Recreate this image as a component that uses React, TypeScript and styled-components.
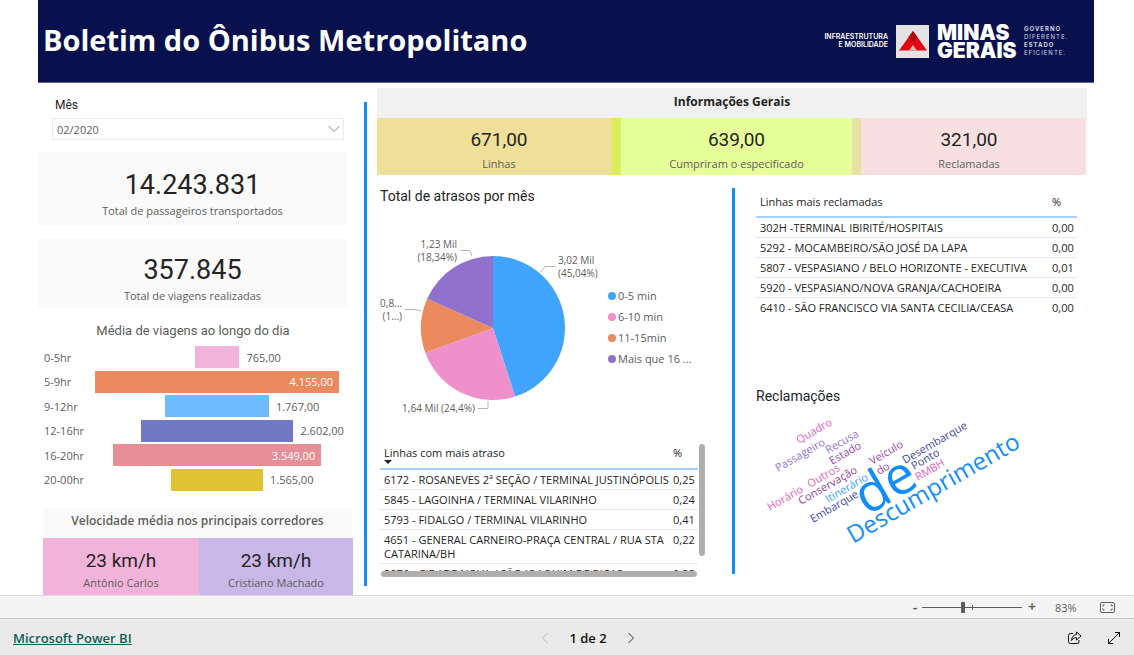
import React from "react";
import styled, { createGlobalStyle } from "styled-components";

const GlobalStyle = createGlobalStyle`
  *, *::before, *::after { box-sizing: border-box; }
  body {
    margin: 0;
    background: #fff;
    color: #252423;
    font-family: "Open Sans", "Noto Sans", sans-serif;
    font-size: 11px;
  }
  h1, h2, h3, p, ul, dl, dd, dt { margin: 0; padding: 0; font-weight: 400; }
  ul { list-style: none; }
  button { border: 0; background: none; padding: 0; font: inherit; cursor: pointer; }
`;

const DIN = `Roboto, "Open Sans", sans-serif`;

/* ---------- page ---------- */

const Page = styled.div`
  display: flex;
  flex-direction: column;
  min-height: 100vh;
`;

const Report = styled.main`
  flex: 1;
  display: flex;
  flex-direction: column;
  padding: 0 40px 0 38px;
`;

const Header = styled.header`
  display: flex;
  justify-content: space-between;
  align-items: center;
  height: 83px;
  padding: 0 25px 0 5px;
  background: #08104d;
  border-bottom: 1px solid #5c6189;
`;

const PageTitle = styled.h1`
  color: #fff;
  font-size: 29px;
  font-weight: 700;
  line-height: 40px;
  padding-bottom: 2px;
`;

const Columns = styled.div`
  flex: 1;
  display: grid;
  grid-template-columns: 316px 3px minmax(0, 1fr);
  column-gap: 10px;
  padding-right: 7px;
`;

const Divider = styled.div<{ $top: number; $bottom: number }>`
  background: #118dff;
  margin: ${(p) => p.$top}px 0 ${(p) => p.$bottom}px;
`;

const PanelTitle = styled.h2`
  font-family: ${DIN};
  font-size: 14px;
  line-height: 18px;
`;

/* ---------- left column ---------- */

const Sidebar = styled.section`
  display: flex;
  flex-direction: column;
  padding-top: 14px;
`;

const Slicer = styled.div`
  display: flex;
  flex-direction: column;
  margin: 0 10px 12px 14px;
  position: relative;

  label {
    padding-left: 3px;
    font-family: ${DIN};
    font-size: 12px;
    line-height: 16px;
  }
  select {
    appearance: none;
    height: 22px;
    margin-top: 5px;
    padding: 0 4px;
    border: 1px solid #eaeaea;
    border-radius: 0;
    background: #fff;
    color: #605e5c;
    font: 11px "Open Sans", sans-serif;
  }
  svg {
    position: absolute;
    right: 4px;
    bottom: 7px;
    pointer-events: none;
  }
`;

const StatCard = styled.div<{ $height: number }>`
  display: flex;
  flex-direction: column;
  align-items: center;
  justify-content: center;
  height: ${(p) => p.$height}px;
  margin: 0 7px 14px 0;
  background: #fafafa;
  padding-top: 8px;
`;

const Value = styled.p<{ $size: number; $line: number }>`
  font-family: ${DIN};
  font-size: ${(p) => p.$size}px;
  line-height: ${(p) => p.$line}px;
`;

const Caption = styled.p`
  color: #605e5c;
  font-size: 11px;
  line-height: 16px;
`;

const FunnelTitle = styled(PanelTitle)`
  color: #605e5c;
  font-size: 13px;
  text-align: center;
  margin: 0 6px 5px 0;
`;

const Funnel = styled.ul`
  display: grid;
  grid-auto-rows: 1fr;
  height: 147px;
  margin: 0 15px 16px 6px;
`;

const FunnelRow = styled.li`
  display: grid;
  grid-template-columns: 51px minmax(0, 1fr);
  align-items: center;
  color: #605e5c;
`;

const FunnelTrack = styled.div`
  display: flex;
  align-items: center;
  justify-content: center;
  white-space: nowrap;
`;

const FunnelBar = styled.div<{ $color: string }>`
  display: flex;
  align-items: center;
  justify-content: flex-end;
  flex: none;
  height: 22px;
  padding-right: 6px;
  background: ${(p) => p.$color};
  color: #fff;
`;

const FunnelSide = styled.span`
  flex: 1 1 0;
  min-width: 0;
  padding-left: 7px;
`;

const Speeds = styled.div`
  margin-left: 5px;
  margin-right: 1px;
`;

const SpeedTitle = styled.h2`
  margin-right: 1px;
  background: #fafafa;
  color: #605e5c;
  font-size: 12px;
  font-weight: 600;
  line-height: 26px;
  padding-bottom: 4px;
  text-align: center;
`;

const SpeedGrid = styled.div`
  display: grid;
  grid-template-columns: 156fr 154fr;
`;

const SpeedCard = styled.div<{ $color: string }>`
  height: 57px;
  padding-top: 9px;
  background: ${(p) => p.$color};
  text-align: center;
`;

/* ---------- right column ---------- */

const Content = styled.section`
  display: flex;
  flex-direction: column;
  padding-top: 5px;
`;

const SectionTitle = styled.h2`
  background: #f1f1f1;
  font-size: 12px;
  font-weight: 700;
  line-height: 28px;
  padding-bottom: 2px;
  text-align: center;
`;

const KpiRow = styled.div`
  display: grid;
  grid-template-columns: 235fr 240fr 225fr;
  margin-right: 1px;
  padding-right: 9px;
`;

const Kpi = styled.div<{ $color: string }>`
  height: 57px;
  margin-right: -9px;
  padding-top: 6px;
  background: ${(p) => p.$color};
  text-align: center;
`;

const Lower = styled.div`
  flex: 1;
  display: grid;
  grid-template-columns: 353px 3px minmax(0, 1fr);
  column-gap: 2px;
`;

const Delays = styled.div`
  padding: 12px 0 0 3px;
`;

const ChartArea = styled.div`
  display: flex;
  margin-top: 12px;
`;

const Legend = styled.ul`
  display: flex;
  flex-direction: column;
  gap: 5px;
  padding-top: 71px;
  color: #605e5c;

  li {
    display: flex;
    align-items: center;
    gap: 2px;
    line-height: 16px;
    white-space: nowrap;
  }
`;

const Dot = styled.span<{ $color: string }>`
  width: 8px;
  height: 8px;
  border-radius: 50%;
  background: ${(p) => p.$color};
`;

const TableFrame = styled.div`
  display: grid;
  grid-template-columns: 318px 6px;
  column-gap: 1px;
  margin-top: 24px;
`;

const TableViewport = styled.div`
  height: 128px;
  overflow: hidden;
`;

const Thumb = styled.div<{ $vertical?: boolean }>`
  border-radius: 3px;
  background: #b0afae;
  height: ${(p) => (p.$vertical ? 112 : 6)}px;
  margin: ${(p) => (p.$vertical ? "1px 0 0" : "0 1px")};
`;

const DataTable = styled.table<{ $head: number; $lift: number }>`
  width: 100%;
  border-collapse: collapse;
  table-layout: fixed;
  line-height: 14px;

  th {
    height: ${(p) => p.$head}px;
    padding: 0 4px ${(p) => p.$lift}px;
    border-bottom: 2px solid #a3d1ff;
    text-align: left;
    font-weight: 400;
    position: relative;
  }
  td {
    height: 20px;
    padding: 3px 4px 2px;
    vertical-align: top;
    border-bottom: 1px solid #e9e9e9;
    white-space: nowrap;
  }
  tbody tr:first-child td { height: 19px; }
  tbody tr:last-child td { border-bottom: 0; }
  th:last-child, td:last-child { width: 25px; padding-left: 0; padding-right: 0; }
`;

const SortMark = styled.svg`
  position: absolute;
  left: 4px;
  bottom: 4px;
`;

const Complaints = styled.div`
  padding: 12px 10px 0 19px;
`;

const CloudTitle = styled(PanelTitle)`
  margin: 69px 0 3px;
`;

/* ---------- bottom bars ---------- */

const ZoomBar = styled.div`
  display: flex;
  align-items: center;
  justify-content: flex-end;
  height: 23px;
  padding-right: 19px;
  border-top: 1px solid #dcdcdc;
  background: #f4f4f4;
  color: #605e5c;
`;

const ZoomButton = styled.button`
  width: 10px;
  color: #555;
  font-size: 14px;
  font-weight: 600;
  line-height: 18px;
`;

const ZoomRange = styled.input`
  appearance: none;
  width: 100px;
  height: 12px;
  margin: 0 5px 0 2px;
  background:
    linear-gradient(#605e5c, #605e5c) 50px 50% / 1px 5px no-repeat,
    linear-gradient(#605e5c, #605e5c) 0 50% / 100% 1px no-repeat;

  &::-webkit-slider-thumb {
    appearance: none;
    width: 4px;
    height: 11px;
    background: #605e5c;
  }
`;

const ZoomLabel = styled.span`
  width: 23px;
  margin: 0 22px 0 18px;
  font-size: 11px;
  white-space: nowrap;
`;

const IconButton = styled.button`
  display: flex;
`;

const Footer = styled.footer`
  display: grid;
  grid-template-columns: 1fr auto 1fr;
  align-items: center;
  height: 37px;
  padding: 0 13px;
  border-top: 1px solid #c4c4c4;
  background: #eaeaea;
`;

const BrandLink = styled.a`
  justify-self: start;
  color: #125d56;
  font-size: 13px;
  font-weight: 600;
  padding-top: 2px;
`;

const Pager = styled.nav`
  display: flex;
  align-items: center;
  gap: 20px;
  margin-left: 42px;
  padding-top: 1px;
  color: #111;
  font-size: 13px;
  font-weight: 600;
`;

const Actions = styled.div`
  display: flex;
  justify-content: flex-end;
  gap: 25px;
  padding-top: 1px;
`;

/* ---------- data ---------- */

const trips = [
  { label: "0-5hr", value: 765, text: "765,00", color: "#f2b3da" },
  { label: "5-9hr", value: 4155, text: "4.155,00", color: "#eb895f" },
  { label: "9-12hr", value: 1767, text: "1.767,00", color: "#70bbff" },
  { label: "12-16hr", value: 2602, text: "2.602,00", color: "#7079c3" },
  { label: "16-20hr", value: 3549, text: "3.549,00", color: "#e68f96" },
  { label: "20-00hr", value: 1565, text: "1.565,00", color: "#e1c233" },
];
const maxTrips = 4155;

const delays = [
  { label: "0-5 min", share: 45.04, color: "#41a4ff" },
  { label: "6-10 min", share: 24.4, color: "#ed90cc" },
  { label: "11-15min", share: 12.22, color: "#eb895f" },
  { label: "Mais que 16 ...", share: 18.34, color: "#9071ce" },
];

const delayedLines = [
  ["6172 - ROSANEVES 2ª SEÇÃO / TERMINAL JUSTINÓPOLIS", "0,25"],
  ["5845 - LAGOINHA / TERMINAL VILARINHO", "0,24"],
  ["5793 - FIDALGO / TERMINAL VILARINHO", "0,41"],
  ["4651 - GENERAL CARNEIRO-PRAÇA CENTRAL / RUA STA\nCATARINA/BH", "0,22"],
  ["3876 - CIDADE NOVA / SÃO JOAQUIM DE BICAS", "0,38"],
];

const complainedLines = [
  ["302H -TERMINAL IBIRITÉ/HOSPITAIS", "0,00"],
  ["5292 - MOCAMBEIRO/SÃO JOSÉ DA LAPA", "0,00"],
  ["5807 - VESPASIANO / BELO HORIZONTE - EXECUTIVA", "0,01"],
  ["5920 - VESPASIANO/NOVA GRANJA/CACHOEIRA", "0,00"],
  ["6410 - SÃO FRANCISCO VIA SANTA CECILIA/CEASA", "0,00"],
];

const words: [string, number, number, number, string][] = [
  ["Quadro", 43, 36, 11, "#e65fb8"],
  ["Passageiro", 22, 64, 11, "#9071ce"],
  ["Recusa", 72, 46, 11, "#9071ce"],
  ["Estado", 76, 57, 11, "#9a4aa6"],
  ["Outros", 54, 80, 11, "#e65fb8"],
  ["Conservação", 45, 97, 11, "#8f3d9c"],
  ["Horário", 14, 103, 11, "#e65fb8"],
  ["Itinerário", 72, 95, 11, "#3d9fff"],
  ["Embarque", 57, 115, 11, "#3c47b0"],
  ["Veículo", 116, 57, 11, "#9a4aa6"],
  ["do", 123, 67, 11, "#9a4aa6"],
  ["Desembarque", 149, 56, 11, "#3c47b0"],
  ["Ponto", 158, 62, 11, "#3c47b0"],
  ["RMBH", 162, 73, 11, "#e65fb8"],
  ["de", 111, 108, 53, "#118dff"],
  ["Descumprimento", 97, 136, 24, "#118dff"],
];

/* ---------- drawings ---------- */

const Drawing = styled.svg`
  overflow: visible;
`;

const Logo = () => (
  <Drawing width="243" height="40" viewBox="0 0 243 40" role="img" aria-label="Minas Gerais">
    <g fill="#fff" fontFamily="Inter, sans-serif">
      <text x="62" y="18" fontSize="7" textAnchor="end" fontWeight="600">INFRAESTRUTURA</text>
      <text x="62" y="26" fontSize="7" textAnchor="end" fontWeight="600">E MOBILIDADE</text>
      <text x="111" y="19" fontSize="21" fontWeight="900">MINAS</text>
      <text x="111" y="37" fontSize="21" fontWeight="900">GERAIS</text>
    </g>
    <g fill="#d5d7e4" fontFamily="Inter, sans-serif" fontSize="6" letterSpacing="1">
      <text x="198" y="10" fontWeight="700">GOVERNO</text>
      <text x="198" y="18">DIFERENTE.</text>
      <text x="198" y="26" fontWeight="700">ESTADO</text>
      <text x="198" y="34">EFICIENTE.</text>
    </g>
    <rect x="70" y="4" width="33" height="33" fill="#e3e3e3" />
    <path d="M87 10 L101 29.500 H73 Z" fill="#e30613" />
    <path d="M87 10 L91.500 16 L87 21 L82.500 16 Z" fill="#a80f12" />
    <path d="M87 24 L91 29.500 H83 Z" fill="#f0b4bd" />
  </Drawing>
);

const polar = (share: number, r: number) => {
  const a = (share / 100) * Math.PI * 2;
  return `${(113 + r * Math.sin(a)).toFixed(2)} ${(111 - r * Math.cos(a)).toFixed(2)}`;
};

const Pie = () => {
  let from = 0;
  return (
    <Drawing width="228" height="202" viewBox="0 0 228 202" role="img" aria-label="Total de atrasos por mês">
      {delays.map((d) => {
        const start = from;
        from += d.share;
        return (
          <path
            key={d.label}
            d={`M113 111 L${polar(start, 72)} A72 72 0 0 1 ${polar(from, 72)} Z`}
            fill={d.color}
          />
        );
      })}
      <g fill="none" stroke="#b3b3b3">
        <path d="M161 55 L165 49.500 H175" />
        <path d="M81 33.500 H90 L92 39" />
        <path d="M25 92.500 H35 L41 94" />
        <path d="M98 191.500 H108 V184" />
      </g>
      <g fill="#605e5c" fontSize="10">
        <text x="178" y="47">3,02 Mil</text>
        <text x="178" y="60">(45,04%)</text>
        <text x="77" y="31" textAnchor="end">1,23 Mil</text>
        <text x="77" y="44" textAnchor="end">(18,34%)</text>
        <text x="22" y="90" textAnchor="end">0,8...</text>
        <text x="22" y="103" textAnchor="end">(1...)</text>
        <text x="95" y="195" textAnchor="end">1,64 Mil (24,4%)</text>
      </g>
    </Drawing>
  );
};

const WordCloud = () => (
  <Drawing width="280" height="145" viewBox="0 0 280 145" role="img" aria-label="Reclamações">
    {words.map(([word, x, y, size, color]) => (
      <text key={word} x={x} y={y} fontSize={size} fill={color} transform={`rotate(-30 ${x} ${y})`}>
        {word}
      </text>
    ))}
  </Drawing>
);

const Chevron = ({ dir, color }: { dir: "left" | "right"; color: string }) => (
  <svg width="8" height="12" viewBox="0 0 8 12" fill="none" stroke={color}>
    <path d={dir === "left" ? "M6.500 1 L1.500 6 L6.500 11" : "M1.500 1 L6.500 6 L1.500 11"} />
  </svg>
);

type LinesTableProps = { title: string; rows: string[][]; head: number; sorted?: boolean };

const LinesTable = ({ title, rows, head, sorted }: LinesTableProps) => (
  <DataTable $head={head} $lift={sorted ? 5 : 0}>
    <thead>
      <tr>
        <th scope="col">
          {title}
          {sorted && (
            <SortMark width="8" height="4" viewBox="0 0 8 4">
              <path d="M0 0 H8 L4 4 Z" fill="#252423" />
            </SortMark>
          )}
        </th>
        <th scope="col">%</th>
      </tr>
    </thead>
    <tbody>
      {rows.map(([name, value]) => (
        <tr key={name}>
          <td>
            {name.split("\n").map((line) => (
              <div key={line}>{line}</div>
            ))}
          </td>
          <td>{value}</td>
        </tr>
      ))}
    </tbody>
  </DataTable>
);

export default function App() {
  return (
    <Page>
      <GlobalStyle />
      <Report>
        <Header>
          <PageTitle>Boletim do Ônibus Metropolitano</PageTitle>
          <Logo />
        </Header>
        <Columns>
          <Sidebar>
            <Slicer>
              <label htmlFor="month">Mês</label>
              <select id="month" defaultValue="02/2020">
                <option>02/2020</option>
              </select>
              <svg width="12" height="8" viewBox="0 0 12 8" fill="none" stroke="#8a8887">
                <path d="M0.500 1 L6 6.500 L11.500 1" />
              </svg>
            </Slicer>
            <StatCard $height={73}>
              <Value $size={27} $line={36}>14.243.831</Value>
              <Caption>Total de passageiros transportados</Caption>
            </StatCard>
            <StatCard $height={69}>
              <Value $size={27} $line={36}>357.845</Value>
              <Caption>Total de viagens realizadas</Caption>
            </StatCard>
            <FunnelTitle>Média de viagens ao longo do dia</FunnelTitle>
            <Funnel>
              {trips.map((t) => {
                const inside = t.value > 3000;
                return (
                  <FunnelRow key={t.label}>
                    <span>{t.label}</span>
                    <FunnelTrack>
                      <FunnelSide />
                      <FunnelBar $color={t.color} style={{ width: `${(t.value / maxTrips) * 100}%` }}>
                        {inside && t.text}
                      </FunnelBar>
                      <FunnelSide>{!inside && t.text}</FunnelSide>
                    </FunnelTrack>
                  </FunnelRow>
                );
              })}
            </Funnel>
            <Speeds>
              <SpeedTitle>Velocidade média nos principais corredores</SpeedTitle>
              <SpeedGrid>
                <SpeedCard $color="#f2b3da">
                  <Value $size={19} $line={28}>23 km/h</Value>
                  <Caption>Antônio Carlos</Caption>
                </SpeedCard>
                <SpeedCard $color="#c8b7e7">
                  <Value $size={19} $line={28}>23 km/h</Value>
                  <Caption>Cristiano Machado</Caption>
                </SpeedCard>
              </SpeedGrid>
            </Speeds>
          </Sidebar>
          <Divider $top={19} $bottom={9} />
          <Content>
            <SectionTitle>Informações Gerais</SectionTitle>
            <KpiRow>
              <Kpi $color="rgba(215, 175, 0, 0.4)">
                <Value $size={19} $line={32}>671,00</Value>
                <Caption>Linhas</Caption>
              </Kpi>
              <Kpi $color="rgba(190, 255, 0, 0.4)">
                <Value $size={19} $line={32}>639,00</Value>
                <Caption>Cumpriram o especificado</Caption>
              </Kpi>
              <Kpi $color="rgba(237, 177, 180, 0.4)">
                <Value $size={19} $line={32}>321,00</Value>
                <Caption>Reclamadas</Caption>
              </Kpi>
            </KpiRow>
            <Lower>
              <Delays>
                <PanelTitle>Total de atrasos por mês</PanelTitle>
                <ChartArea>
                  <Pie />
                  <Legend>
                    {delays.map((d) => (
                      <li key={d.label}>
                        <Dot $color={d.color} />
                        {d.label}
                      </li>
                    ))}
                  </Legend>
                </ChartArea>
                <TableFrame>
                  <TableViewport>
                    <LinesTable title="Linhas com mais atraso" rows={delayedLines} head={26} sorted />
                  </TableViewport>
                  <Thumb $vertical />
                  <Thumb />
                </TableFrame>
              </Delays>
              <Divider $top={13} $bottom={21} />
              <Complaints>
                <LinesTable title="Linhas mais reclamadas" rows={complainedLines} head={30} />
                <CloudTitle>Reclamações</CloudTitle>
                <WordCloud />
              </Complaints>
            </Lower>
          </Content>
        </Columns>
      </Report>
      <ZoomBar>
        <ZoomButton aria-label="Reduzir">-</ZoomButton>
        <ZoomRange type="range" min={0} max={100} defaultValue={41} aria-label="Zoom" />
        <ZoomButton aria-label="Ampliar">+</ZoomButton>
        <ZoomLabel>83%</ZoomLabel>
        <IconButton aria-label="Ajustar à página">
          <svg width="15" height="11" viewBox="0 0 15 11" fill="none" stroke="#605e5c">
            <rect x="0.500" y="0.500" width="14" height="10" rx="1.500" />
            <path d="M3 4.500 V3 H4.500 M10.500 3 H12 V4.500 M12 6.500 V8 H10.500 M4.500 8 H3 V6.500" />
          </svg>
        </IconButton>
      </ZoomBar>
      <Footer>
        <BrandLink href="#">Microsoft Power BI</BrandLink>
        <Pager aria-label="Páginas">
          <IconButton aria-label="Página anterior" disabled>
            <Chevron dir="left" color="#bdbdbd" />
          </IconButton>
          <span>1 de 2</span>
          <IconButton aria-label="Próxima página">
            <Chevron dir="right" color="#333" />
          </IconButton>
        </Pager>
        <Actions>
          <IconButton aria-label="Compartilhar">
            <svg width="14" height="14" viewBox="0 0 14 14" fill="none" stroke="#111">
              <path d="M5 2.500 H2.500 Q0.500 2.500 0.500 4.500 V10.500 Q0.500 12.500 2.500 12.500 H9 Q11 12.500 11 10.500 V9" />
              <path d="M8.500 1 L13 5 L8.500 9 V6.500 Q5.500 6.500 3.500 9.500 Q4 4 8.500 3.500 Z" strokeLinejoin="round" />
            </svg>
          </IconButton>
          <IconButton aria-label="Tela inteira">
            <svg width="14" height="14" viewBox="0 0 14 14" fill="none" stroke="#111">
              <path d="M1.500 12.500 L12.500 1.500 M8 1.500 H12.500 V6 M1.500 8 V12.500 H6" />
            </svg>
          </IconButton>
        </Actions>
      </Footer>
    </Page>
  );
}
